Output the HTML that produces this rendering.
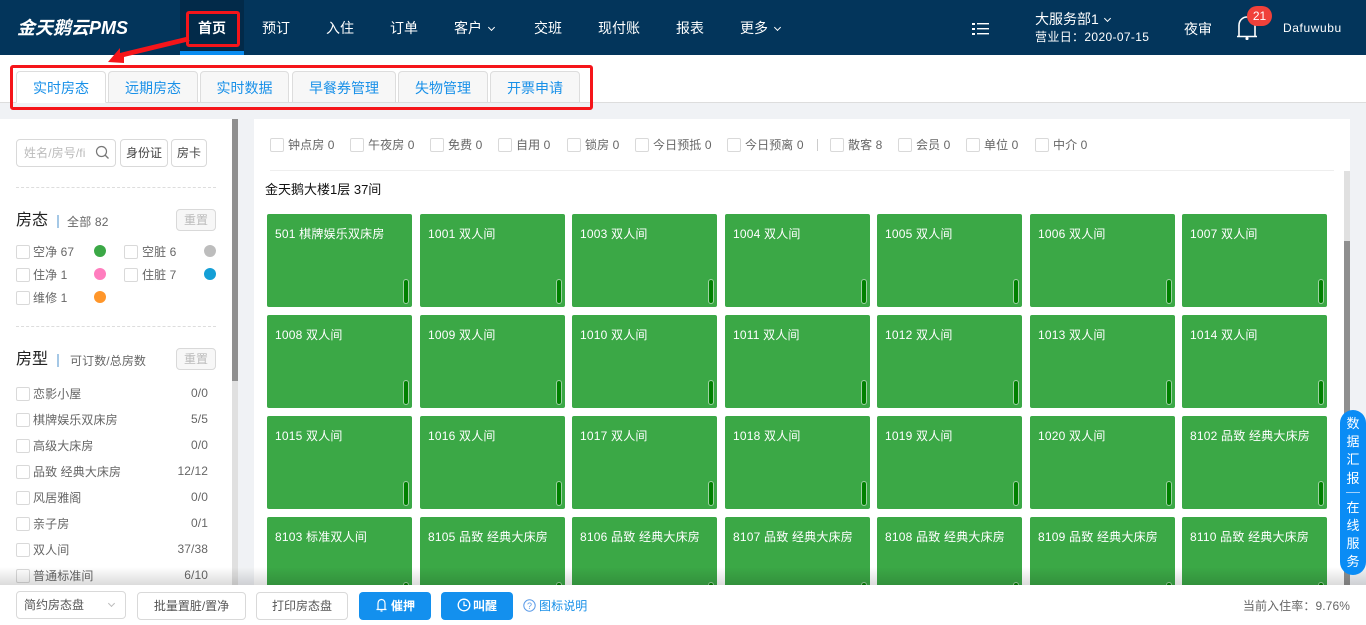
<!DOCTYPE html>
<html lang="zh"><head><meta charset="utf-8"><title>金天鹅云PMS</title>
<style>
*,*:after{box-sizing:border-box}
html,body{margin:0;padding:0}
body{width:1366px;height:625px;overflow:hidden;position:relative;background:#f0f2f5;font-family:"Liberation Sans","Noto Sans CJK SC",sans-serif;font-size:12px;color:#666}
.a{position:absolute;white-space:nowrap}
.hd{position:absolute;left:0;top:0;width:1366px;height:55px;background:#03355b}
.n{position:absolute;top:19px;font-size:14px;line-height:18px;color:#fff;white-space:nowrap}
.v{display:inline-block;width:6px;height:6px;border-right:1px solid #fff;border-bottom:1px solid #fff;transform:rotate(45deg);margin-left:7px;position:relative;top:-3px}
.tab{position:absolute;top:71px;height:32px;background:#f7f7f7;border:1px solid #ddd;border-radius:4px 4px 0 0;color:#1890e8;font-size:14px;line-height:33px;text-align:center}
.cb{position:absolute;width:14px;height:14px;border:1px solid #d9d9d9;border-radius:2px;background:#fff}
.t{position:absolute;white-space:nowrap;font-size:12px;line-height:16px;color:#666;letter-spacing:.1px}
.dot{position:absolute;width:12px;height:12px;border-radius:50%}
.btn{position:absolute;border:1px solid #d9d9d9;border-radius:4px;background:#fff;text-align:center;color:#555;font-size:12px}
.dash{position:absolute;left:16px;width:200px;border-top:1px dashed #ddd}
.c{position:absolute;width:145px;height:93px;background:#3ba846;border-radius:2px;color:#fff;font-size:12px;line-height:16px;padding:12px 0 0 8px;white-space:nowrap;letter-spacing:.2px}
.c:after{content:"";position:absolute;right:3px;bottom:3px;width:6px;height:25px;background:#008000;border:1px solid #9fd0a4;border-radius:3px}
.blue{position:absolute;top:592px;height:28px;background:#1390ee;border-radius:4px;color:#fff;font-size:12px;font-weight:bold;line-height:28px}
</style></head><body>

<div class="hd">
<div class="a" style="left:17px;top:16px;font-size:18px;line-height:24px;font-weight:bold;font-style:italic;color:#fff">金天鹅云PMS</div>
<div class="a" style="left:180px;top:0;width:64px;height:55px;background:#022a49;border-bottom:4px solid #0a8cf0"></div>
<div class="n" style="left:198px;font-weight:bold">首页</div>
<div class="n" style="left:262px">预订</div>
<div class="n" style="left:326px">入住</div>
<div class="n" style="left:390px">订单</div>
<div class="n" style="left:454px">客户<span class="v" style="width:5px;height:5px"></span></div>
<div class="n" style="left:534px">交班</div>
<div class="n" style="left:598px">现付账</div>
<div class="n" style="left:676px">报表</div>
<div class="n" style="left:740px">更多<span class="v" style="width:5px;height:5px"></span></div>
<svg class="a" style="left:972px;top:22px" width="17" height="14" viewBox="0 0 17 14"><g fill="#fff"><rect x="0" y="1" width="3" height="2"/><rect x="0" y="6" width="3" height="2"/><rect x="0" y="11" width="3" height="2"/><rect x="5" y="1" width="12" height="1.4"/><rect x="5" y="6" width="12" height="1.4"/><rect x="5" y="11" width="12" height="1.4"/></g></svg>
<div class="a" style="left:1035px;top:10px;font-size:14px;line-height:18px;color:#fff">大服务部1<span class="v" style="width:5px;height:5px;margin-left:6px"></span></div>
<div class="a" style="left:1035px;top:29px;font-size:12px;line-height:17px;color:#fff;letter-spacing:.35px">营业日：2020-07-15</div>
<div class="n" style="left:1184px;font-size:14px;top:20px">夜审</div>
<svg class="a" style="left:1236px;top:14px" width="22" height="28" viewBox="0 0 22 28"><path d="M3 22V11.500C3 6.500 6.500 3 11 3s8 3.500 8 8.500V22M1 22.500H21" fill="none" stroke="#fff" stroke-width="1.600"/><rect x="9.500" y="23" width="3" height="3" rx="1" fill="#fff"/></svg>
<div class="a" style="left:1247px;top:6px;width:25px;height:20px;border-radius:10px;background:#f0413a;color:#fff;font-size:12px;line-height:20px;text-align:center">21</div>
<div class="a" style="left:1283px;top:20px;font-size:12px;line-height:17px;color:#fff;letter-spacing:.6px">Dafuwubu</div>
</div>

<div class="a" style="left:0;top:55px;width:1366px;height:48px;background:#fff;border-bottom:1px solid #ddd"></div>
<div class="tab" style="left:16px;width:90px;background:#fff;border-bottom:1px solid #fff">实时房态</div>
<div class="tab" style="left:108px;width:90px">远期房态</div>
<div class="tab" style="left:200px;width:89px">实时数据</div>
<div class="tab" style="left:292px;width:104px">早餐券管理</div>
<div class="tab" style="left:398px;width:90px">失物管理</div>
<div class="tab" style="left:490px;width:90px">开票申请</div>

<!-- Sidebar -->
<div class="a" style="left:0;top:119px;width:232px;height:470px;background:#fff"></div>
<div class="a" style="left:232px;top:119px;width:6px;height:470px;background:#e0e0e0"></div>
<div class="a" style="left:232px;top:119px;width:6px;height:262px;background:#8f8f8f"></div>
<div class="btn" style="left:16px;top:139px;width:100px;height:28px;border-radius:4px"></div>
<div class="t" style="left:24px;top:145px;color:#bbb;width:64px;overflow:hidden">姓名/房号/fi</div>
<svg class="a" style="left:95px;top:145px" width="15" height="15" viewBox="0 0 15 15"><circle cx="6.500" cy="6.500" r="5" fill="none" stroke="#777" stroke-width="1.200"/><path d="M10 10l3.500 3.500" stroke="#777" stroke-width="1.300"/></svg>
<div class="btn" style="left:120px;top:139px;width:48px;height:28px;line-height:27px;color:#444">身份证</div>
<div class="btn" style="left:171px;top:139px;width:36px;height:28px;line-height:27px;color:#444">房卡</div>
<div class="dash" style="top:187px"></div>

<div class="a" style="left:16px;top:210px;font-size:16px;line-height:22px;color:#222">房态</div>
<div class="a" style="left:57px;top:215px;width:2px;height:13px;background:#a5c8e6"></div>
<div class="t" style="left:67px;top:214px;letter-spacing:.2px">全部 82</div>
<div class="btn" style="left:176px;top:209px;width:40px;height:22px;line-height:20px;background:#f7f7f7;color:#bbb">重置</div>

<div class="cb" style="left:16px;top:245px"></div><div class="t" style="left:33px;top:244px">空净 67</div><div class="dot" style="left:94px;top:245px;background:#3ba846"></div>
<div class="cb" style="left:124px;top:245px"></div><div class="t" style="left:142px;top:244px">空脏 6</div><div class="dot" style="left:204px;top:245px;background:#bdbdbd"></div>
<div class="cb" style="left:16px;top:268px"></div><div class="t" style="left:33px;top:267px">住净 1</div><div class="dot" style="left:94px;top:268px;background:#ff7dbe"></div>
<div class="cb" style="left:124px;top:268px"></div><div class="t" style="left:142px;top:267px">住脏 7</div><div class="dot" style="left:204px;top:268px;background:#149fd6"></div>
<div class="cb" style="left:16px;top:291px"></div><div class="t" style="left:33px;top:290px">维修 1</div><div class="dot" style="left:94px;top:291px;background:#ff962a"></div>
<div class="dash" style="top:326px"></div>

<div class="a" style="left:16px;top:349px;font-size:16px;line-height:22px;color:#222">房型</div>
<div class="a" style="left:57px;top:354px;width:2px;height:13px;background:#a5c8e6"></div>
<div class="t" style="left:70px;top:353px">可订数/总房数</div>
<div class="btn" style="left:176px;top:348px;width:40px;height:22px;line-height:20px;background:#f7f7f7;color:#bbb">重置</div>

<div class="cb" style="left:16px;top:387px"></div><div class="t" style="left:33px;top:386px">恋影小屋</div><div class="t" style="right:1158px;top:385px">0/0</div>
<div class="cb" style="left:16px;top:413px"></div><div class="t" style="left:33px;top:412px">棋牌娱乐双床房</div><div class="t" style="right:1158px;top:411px">5/5</div>
<div class="cb" style="left:16px;top:439px"></div><div class="t" style="left:33px;top:438px">高级大床房</div><div class="t" style="right:1158px;top:437px">0/0</div>
<div class="cb" style="left:16px;top:465px"></div><div class="t" style="left:33px;top:464px">品致 经典大床房</div><div class="t" style="right:1158px;top:463px">12/12</div>
<div class="cb" style="left:16px;top:491px"></div><div class="t" style="left:33px;top:490px">风居雅阁</div><div class="t" style="right:1158px;top:489px">0/0</div>
<div class="cb" style="left:16px;top:517px"></div><div class="t" style="left:33px;top:516px">亲子房</div><div class="t" style="right:1158px;top:515px">0/1</div>
<div class="cb" style="left:16px;top:543px"></div><div class="t" style="left:33px;top:542px">双人间</div><div class="t" style="right:1158px;top:541px">37/38</div>
<div class="cb" style="left:16px;top:569px"></div><div class="t" style="left:33px;top:568px">普通标准间</div><div class="t" style="right:1158px;top:567px">6/10</div>

<!-- Main -->
<div class="a" style="left:254px;top:119px;width:1096px;height:52px;background:#fff"></div>
<div class="a" style="left:254px;top:171px;width:1090px;height:418px;background:#fff"></div>
<div class="a" style="left:1344px;top:171px;width:6px;height:418px;background:#e0e0e0"></div>
<div class="a" style="left:1344px;top:241px;width:6px;height:348px;background:#8f8f8f"></div>
<div class="a" style="left:270px;top:170px;width:1064px;height:1px;background:#eee"></div>

<div class="cb" style="left:270px;top:138px"></div><div class="t" style="left:288px;top:137px">钟点房 0</div>
<div class="cb" style="left:350px;top:138px"></div><div class="t" style="left:368px;top:137px">午夜房 0</div>
<div class="cb" style="left:430px;top:138px"></div><div class="t" style="left:448px;top:137px">免费 0</div>
<div class="cb" style="left:498px;top:138px"></div><div class="t" style="left:516px;top:137px">自用 0</div>
<div class="cb" style="left:567px;top:138px"></div><div class="t" style="left:585px;top:137px">锁房 0</div>
<div class="cb" style="left:635px;top:138px"></div><div class="t" style="left:653px;top:137px">今日预抵 0</div>
<div class="cb" style="left:727px;top:138px"></div><div class="t" style="left:745px;top:137px">今日预离 0</div>
<div class="a" style="left:817px;top:139px;width:1px;height:12px;background:#ccc"></div>
<div class="cb" style="left:830px;top:138px"></div><div class="t" style="left:848px;top:137px">散客 8</div>
<div class="cb" style="left:898px;top:138px"></div><div class="t" style="left:916px;top:137px">会员 0</div>
<div class="cb" style="left:966px;top:138px"></div><div class="t" style="left:984px;top:137px">单位 0</div>
<div class="cb" style="left:1035px;top:138px"></div><div class="t" style="left:1053px;top:137px">中介 0</div>

<div class="a" style="left:265px;top:181px;font-size:13px;line-height:18px;color:#111">金天鹅大楼1层 37间</div>

<div class="c" style="left:267px;top:214px">501 棋牌娱乐双床房</div>
<div class="c" style="left:420px;top:214px">1001 双人间</div>
<div class="c" style="left:572px;top:214px">1003 双人间</div>
<div class="c" style="left:725px;top:214px">1004 双人间</div>
<div class="c" style="left:877px;top:214px">1005 双人间</div>
<div class="c" style="left:1030px;top:214px">1006 双人间</div>
<div class="c" style="left:1182px;top:214px">1007 双人间</div>
<div class="c" style="left:267px;top:315px">1008 双人间</div>
<div class="c" style="left:420px;top:315px">1009 双人间</div>
<div class="c" style="left:572px;top:315px">1010 双人间</div>
<div class="c" style="left:725px;top:315px">1011 双人间</div>
<div class="c" style="left:877px;top:315px">1012 双人间</div>
<div class="c" style="left:1030px;top:315px">1013 双人间</div>
<div class="c" style="left:1182px;top:315px">1014 双人间</div>
<div class="c" style="left:267px;top:416px">1015 双人间</div>
<div class="c" style="left:420px;top:416px">1016 双人间</div>
<div class="c" style="left:572px;top:416px">1017 双人间</div>
<div class="c" style="left:725px;top:416px">1018 双人间</div>
<div class="c" style="left:877px;top:416px">1019 双人间</div>
<div class="c" style="left:1030px;top:416px">1020 双人间</div>
<div class="c" style="left:1182px;top:416px">8102 品致 经典大床房</div>
<div class="c" style="left:267px;top:517px">8103 标准双人间</div>
<div class="c" style="left:420px;top:517px">8105 品致 经典大床房</div>
<div class="c" style="left:572px;top:517px">8106 品致 经典大床房</div>
<div class="c" style="left:725px;top:517px">8107 品致 经典大床房</div>
<div class="c" style="left:877px;top:517px">8108 品致 经典大床房</div>
<div class="c" style="left:1030px;top:517px">8109 品致 经典大床房</div>
<div class="c" style="left:1182px;top:517px">8110 品致 经典大床房</div>

<!-- Bottom bar -->
<div class="a" style="left:0;top:567px;width:1366px;height:18px;background:linear-gradient(to bottom,rgba(0,0,0,0),rgba(0,0,0,.14))"></div>
<div class="a" style="left:0;top:585px;width:1366px;height:40px;background:#fff"></div>
<div class="btn" style="left:16px;top:591px;width:110px;height:28px;line-height:27px;text-align:left;padding-left:7px">简约房态盘</div>
<div class="a" style="left:109px;top:601px;width:5px;height:5px;border-right:1px solid #bbb;border-bottom:1px solid #bbb;transform:rotate(45deg)"></div>
<div class="btn" style="left:137px;top:592px;width:109px;height:28px;line-height:27px">批量置脏/置净</div>
<div class="btn" style="left:256px;top:592px;width:92px;height:28px;line-height:27px">打印房态盘</div>
<div class="blue" style="left:359px;width:72px;padding-left:32px">催押</div>
<svg class="a" style="left:376px;top:598px" width="11" height="15" viewBox="0 0 11 15"><path d="M2 11V5.500C2 3 3.500 1.500 5.500 1.500S9 3 9 5.500V11M.5 11.500h10M4.500 13h2" fill="none" stroke="#fff" stroke-width="1.200"/></svg>
<div class="blue" style="left:441px;width:72px;padding-left:32px">叫醒</div>
<svg class="a" style="left:457px;top:598px" width="14" height="14" viewBox="0 0 14 14"><circle cx="7" cy="7" r="5.800" fill="none" stroke="#fff" stroke-width="1.300"/><path d="M7 3.500V7.500H10" fill="none" stroke="#fff" stroke-width="1.200"/></svg>
<svg class="a" style="left:523px;top:599px" width="13" height="13" viewBox="0 0 13 13"><circle cx="6.500" cy="6.500" r="5.700" fill="none" stroke="#5b9be8" stroke-width="1"/><text x="6.500" y="9.800" font-size="9" text-anchor="middle" fill="#5b9be8" font-family="Liberation Sans">?</text></svg>
<div class="t" style="left:539px;top:598px;color:#1890e8">图标说明</div>
<div class="t" style="right:16px;top:598px">当前入住率：9.76%</div>

<!-- Float -->
<div class="a" style="left:1340px;top:410px;width:26px;height:165px;background:#0a8cf5;border-radius:13px;color:#fff;font-size:13px;text-align:center;line-height:18.200px;padding-top:5px;white-space:normal">数<br>据<br>汇<br>报<div style="height:1px;background:#9fd0fb;margin:4px 6px 6px"></div>在<br>线<br>服<br>务</div>

<!-- Annotation -->
<div class="a" style="left:186px;top:11px;width:54px;height:36px;border:3px solid #f5151a;border-radius:3px"></div>
<div class="a" style="left:10px;top:65px;width:583px;height:45px;border:3px solid #f5151a;border-radius:3px"></div>
<svg class="a" style="left:105px;top:34px" width="90" height="32" viewBox="0 0 90 32"><path d="M81 3 L85 7 L19 23 L19 29 L3 28 L15 14 L15 19 Z" fill="#f5151a"/></svg>

</body></html>
